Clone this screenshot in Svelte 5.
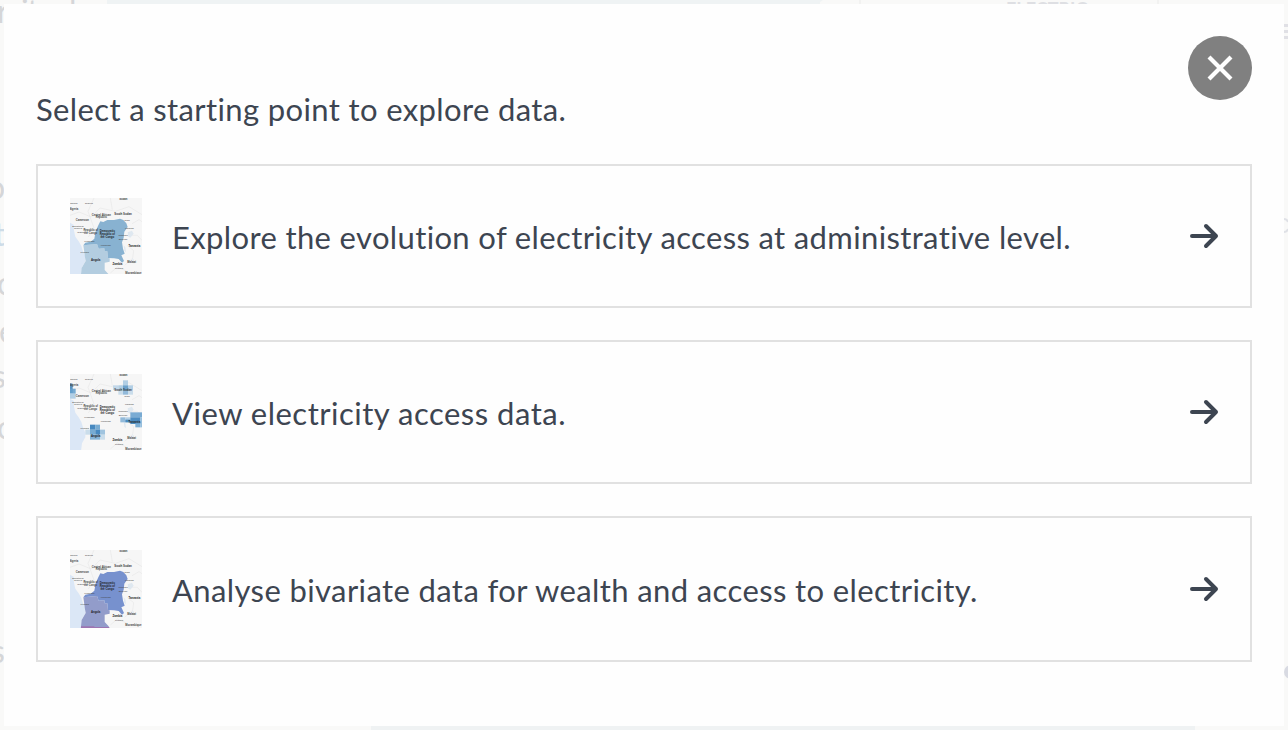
<script>
  const country = '103,100 109,88 118,90 130,84 150,84 168,80 178,84 187,94 191,105 181,119 179,137 174,151 177,170 182,185 172,190 180,207 174,212 164,201 150,199 132,198 130,178 122,178 121,169 104,170 99,156 58,160 64,152 80,149 91,140 95,118';
  const south = '58,160 99,156 104,170 121,169 122,178 130,178 132,198 137,199 137,209 122,212 122,234 134,247 138,256 50,256 53,228 65,207 62,190 60,174';
  const labels = [
    [178, 23, 'Sudan', 1], [29, 36, 'Ghana'], [75, 36, 'Nigeria'], [29, 54, 'Nigeria', 1],
    [177, 70, 'South Sudan', 3], [112, 71, 'Central African', 1], [112, 78, 'Republic', 1],
    [55, 87, 'Cameroon', 1], [189, 87, 'Juba'], [42, 105, 'Equatorial'], [42, 112, 'Guinea'],
    [80, 118, 'Republic of', 1], [80, 126, 'the Congo', 1], [51, 124, 'Gabon'], [196, 111, 'Uganda'],
    [130, 120, 'Democratic', 2], [130, 129, 'Republic of', 2], [130, 138, 'the Congo', 2],
    [177, 133, 'Rwanda'], [177, 144, 'Burundi'], [76, 151, 'Kinshasa'], [125, 162, 'Kananga'],
    [211, 165, 'Tanzania', 2], [62, 182, 'Luanda'], [95, 207, 'Angola', 2],
    [160, 220, 'Zambia', 2], [165, 231, 'Lusaka'], [203, 213, 'Malawi', 1], [208, 247, 'Mozambique', 1]
  ];
  const cells = [
    [18, 47, 8, 28, '#3f83b9'], [18, 62, 17, 15, '#65a1cd'], [18, 77, 17, 15, '#a9cae3'],
    [147, 52, 16, 14, '#bcd4e7'], [163, 52, 14, 14, '#a9cae3'], [177, 37, 15, 15, '#a9cae3'], [177, 52, 15, 14, '#5996c6'], [192, 52, 15, 14, '#a9cae3'], [163, 66, 14, 14, '#c4d9e9'], [177, 66, 15, 14, '#84b2d6'], [192, 66, 15, 14, '#c4d9e9'],
    [169, 148, 15, 15, '#84b2d6'], [184, 148, 15, 15, '#a9cae3'], [199, 133, 35, 15, '#68a1ce'], [199, 148, 30, 20, '#347db9'], [184, 155, 15, 8, '#3b82bb'], [214, 163, 15, 15, '#6ba4cf'], [229, 148, 5, 30, '#8ab7d9'],
    [78, 170, 16, 15, '#2f7ab8'], [94, 170, 14, 15, '#65a1cd'], [78, 185, 16, 15, '#65a1cd'], [94, 185, 14, 15, '#2f7ab8'], [108, 185, 15, 15, '#94bddc'], [64, 185, 14, 15, '#c4d9e9'], [78, 200, 30, 15, '#75aad2'], [108, 200, 15, 15, '#c4d9e9']
  ];
  const options = [
    { text: 'Explore the evolution of electricity access at administrative level.', kind: 'access', height: 76 },
    { text: 'View electricity access data.', kind: 'grid', height: 76 },
    { text: 'Analyse bivariate data for wealth and access to electricity.', kind: 'bivariate', height: 78 }
  ];
</script>

<div class="page">
  <div class="backdrop" aria-hidden="true">
    <i class="shade top"></i><i class="slant"></i><i class="shade bottom"></i>
    <i class="line" style:left="859px"></i><i class="line" style:left="1157px"></i>
    <span style:left="-3px" style:top="-8px">r</span>
    <span class="word" style:left="21px" style:top="-8px">ity d</span>
    <b>ELECTRIC</b>
    <span style:left="-13px" style:top="168px">o</span>
    <span class="blue" style:left="-6px" style:top="215px">t</span>
    <span style:left="-3px" style:top="264px">c</span>
    <span style:left="-1px" style:top="312px">e</span>
    <span style:left="-8px" style:top="357px">s</span>
    <span style:left="-3px" style:top="408px">c</span>
    <span style:left="-9px" style:top="632px">s</span>
    <i class="bar" style:top="24px"></i><i class="bar" style:top="30px"></i><i class="bar" style:top="36px"></i>
    <svg class="curve" viewBox="0 0 4 16"><path d="M0 1Q3 1 4 4M0 14Q3 14 4 11" /></svg><i class="dot"></i>
  </div>

  <main class="modal">
    <header>
      <h1>Select a starting point to explore data.</h1>
      <button class="close" aria-label="Close">
        <svg viewBox="0 0 64 64"><path d="M21 21 43 43M43 21 21 43" /></svg>
      </button>
    </header>
    <div class="options">
      {#each options as option}
        <button class="option {option.kind}">
          <svg class="map" height={option.height} viewBox="18 18 216 {option.height * 3}">
            <rect x="18" y="18" width="216" height="240" fill="#f6f6f6" />
            <path class="water" d="M18 92 29 98 30 116 34 134 44 148 52 162 57 178 64 194 64 208 54 226 50 258 18 258Z" />
            <g class="roads">
              <path d="M18 70 45 60 82 75 108 48 154 58 195 44 234 68M90 18 72 58 90 108 73 135M139 18 145 53M204 95 225 83 234 89M193 130 220 130 234 145M182 220 206 199 209 176 189 160M139 243 160 225 187 237" />
            </g>
            <path class="lake" d="M191 121 204 116 209 125 199 137 193 134ZM179 160 184 166 186 181 181 176ZM205 197 210 205 211 216 206 211Z" />
            {#if option.kind === 'grid'}
              {#each cells as [x, y, w, h, color]}
                <rect {x} {y} width={w} height={h} fill={color} opacity="0.88" />
              {/each}
            {:else}
              <polygon class="south" points={south} />
              <polygon class="country" points={country} />
              {#if option.kind === 'bivariate'}
                <path d="M51 247 91 247 91 249 134 249 138 253 51 253Z" fill="#9d75b1" />
              {/if}
            {/if}
            {#each labels as [x, y, label, level = 0]}
              <text {x} {y} class="level{level}">{label}</text>
            {/each}
          </svg>
          <span class="caption">{option.text}</span>
          <svg class="arrow" viewBox="0 0 32 28"><path d="M4 14H28M18 4 28 14 18 24" /></svg>
        </button>
      {/each}
    </div>
  </main>
</div>

<style>
  :global(body) { margin: 0; }
  .page { position: relative; box-sizing: border-box; width: 1288px; height: 730px; padding: 4px; overflow: hidden; background: #f9f9f8; font-family: Lato, sans-serif; font-variant-ligatures: none; }
  .backdrop { position: absolute; inset: 0; color: #d5d6d8; font-size: 32px; line-height: 38px; }
  .backdrop > * { position: absolute; }
  .backdrop .word { letter-spacing: -1.4px; white-space: nowrap; }
  .backdrop .blue { color: #cddce8; }
  .backdrop b { left: 1006px; top: -1px; font-size: 18px; line-height: 20px; color: #dedfe3; }
  .shade { height: 4px; background: #eff3f4; }
  .top { left: 107px; top: 0; width: 713px; }
  .slant { left: 817px; top: 0; border-top: 4px solid #eff3f4; border-right: 6px solid transparent; }
  .bottom { left: 371px; bottom: 0; width: 824px; background: #eff2f3; }
  .line { top: 0; width: 2px; height: 4px; background: #f2f2f1; }
  .bar { left: 1284px; width: 4px; height: 3px; background: #e0e0e5; }
  .curve { left: 1284px; top: 218px; width: 4px; height: 16px; fill: none; stroke: #dfe1e6; stroke-width: 2; }
  .dot { left: 1284px; top: 665px; width: 14px; height: 14px; border-radius: 50%; background: #d8dae2; }
  .modal { position: relative; box-sizing: border-box; width: 1280px; height: 722px; padding: 32px; background: #fefefe; color: #3d4551; }
  header { display: flex; justify-content: space-between; align-items: flex-start; height: 128px; }
  h1 { margin: 53px 0 0; font-size: 31px; line-height: 40px; font-weight: 400; letter-spacing: 0.37px; white-space: nowrap; }
  button { font: inherit; color: inherit; padding: 0; border: 0; font-variant-ligatures: none; }
  .close { width: 64px; height: 64px; border-radius: 50%; background: #808080; }
  .close svg { display: block; fill: none; stroke: #fff; stroke-width: 4.2; }
  .options { display: flex; flex-direction: column; gap: 32px; }
  .option { display: flex; align-items: center; box-sizing: border-box; width: 1216px; padding: 32px 30px 32px 32px; border: 2px solid #e1e1e1; background: #fefefe; text-align: left; }
  .map { display: block; width: 72px; flex: none; }
  .caption { flex: 1; margin-left: 30px; padding-top: 2px; font-size: 31px; line-height: 40px; letter-spacing: 0.36px; white-space: nowrap; }
  .grid .caption { letter-spacing: 0.5px; }
  .bivariate .caption { letter-spacing: 0.39px; }
  .arrow { width: 32px; height: 28px; fill: none; stroke: #3d4551; stroke-width: 4; stroke-linecap: round; stroke-linejoin: round; }
  .water { fill: #dbe7f6; }
  .lake { fill: #dfe8f0; }
  .roads { fill: none; stroke: #e3e3e3; stroke-width: 1.5; }
  .country { fill: #88b2d1; }
  .south { fill: #b3cde0; }
  .bivariate .country { fill: #7791ce; }
  .bivariate .south { fill: #929cca; }
  .map text { font: 7.6px "Liberation Sans", sans-serif; letter-spacing: 0; text-anchor: middle; fill: #444; }
  .map .level1 { font-size: 8px; font-weight: 700; }
  .map .level2 { font-size: 8.4px; font-weight: 700; fill: #222; }
  .map .level3 { font-size: 8.5px; font-weight: 700; fill: #333; }
</style>
